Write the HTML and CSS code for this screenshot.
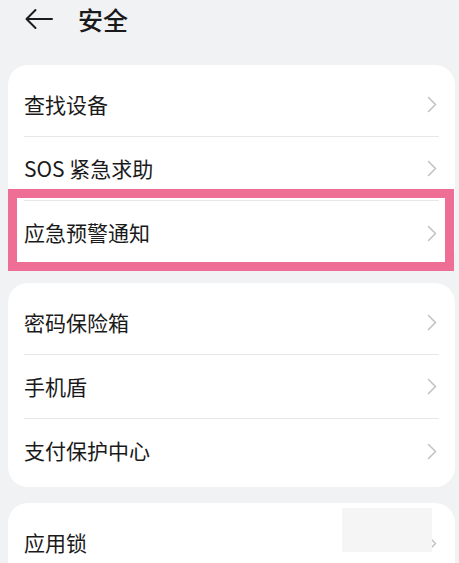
FILE: index.html
```html
<!DOCTYPE html>
<html lang="zh">
<head>
<meta charset="utf-8">
<link rel="stylesheet" href="styles.css">
</head>
<body>
<header class="topbar">
  <svg class="back" width="28" height="22" viewBox="0 0 28 22"><path d="M10.5 2 L1.5 11 L10.5 20 M1.5 11 H27" fill="none" stroke="#1c1c1c" stroke-width="2" stroke-linecap="round" stroke-linejoin="round"/></svg>
  <h1 class="title">安全</h1>
</header>

<section class="card card-first">
  <div class="row"><span class="label">查找设备</span><svg class="chev" width="10" height="17" viewBox="0 0 10 17"><path d="M1.5 1.5 L8.5 8.5 L1.5 15.5" fill="none" stroke="#c3c3c3" stroke-width="1.6" stroke-linecap="round" stroke-linejoin="round"/></svg></div>
  <div class="row"><span class="label">SOS 紧急求助</span><svg class="chev" width="10" height="17" viewBox="0 0 10 17"><path d="M1.5 1.5 L8.5 8.5 L1.5 15.5" fill="none" stroke="#c3c3c3" stroke-width="1.6" stroke-linecap="round" stroke-linejoin="round"/></svg></div>
  <div class="row row-last row-marked"><span class="label">应急预警通知</span><svg class="chev" width="10" height="17" viewBox="0 0 10 17"><path d="M1.5 1.5 L8.5 8.5 L1.5 15.5" fill="none" stroke="#c3c3c3" stroke-width="1.6" stroke-linecap="round" stroke-linejoin="round"/></svg></div>
</section>

<section class="card card-second">
  <div class="row"><span class="label">密码保险箱</span><svg class="chev" width="10" height="17" viewBox="0 0 10 17"><path d="M1.5 1.5 L8.5 8.5 L1.5 15.5" fill="none" stroke="#c3c3c3" stroke-width="1.6" stroke-linecap="round" stroke-linejoin="round"/></svg></div>
  <div class="row"><span class="label">手机盾</span><svg class="chev" width="10" height="17" viewBox="0 0 10 17"><path d="M1.5 1.5 L8.5 8.5 L1.5 15.5" fill="none" stroke="#c3c3c3" stroke-width="1.6" stroke-linecap="round" stroke-linejoin="round"/></svg></div>
  <div class="row row-last"><span class="label">支付保护中心</span><svg class="chev" width="10" height="17" viewBox="0 0 10 17"><path d="M1.5 1.5 L8.5 8.5 L1.5 15.5" fill="none" stroke="#c3c3c3" stroke-width="1.6" stroke-linecap="round" stroke-linejoin="round"/></svg></div>
</section>

<section class="card card-third">
  <div class="row row-last row-masked"><span class="label">应用锁</span><svg class="chev" width="10" height="17" viewBox="0 0 10 17"><path d="M1.5 1.5 L8.5 8.5 L1.5 15.5" fill="none" stroke="#c3c3c3" stroke-width="1.6" stroke-linecap="round" stroke-linejoin="round"/></svg></div>
</section>
</body>
</html>
```

FILE: styles.css
```css
html, body {
  margin: 0;
  padding: 0;
}
body {
  background: #f1f2f4;
  font-family: "Noto Sans CJK SC", "Noto Sans", sans-serif;
  color: #1a1a1a;
  width: 459px;
  height: 563px;
  overflow: hidden;
}
.topbar {
  display: flex;
  align-items: center;
  height: 38px;
  padding-left: 25px;
}
.back {
  display: block;
  margin-right: 25px;
}
.title {
  margin: 0;
  font-size: 25px;
  font-weight: 500;
  line-height: 38px;
  color: #1a1a1a;
}
.card {
  background: #fff;
  border-radius: 20px;
  margin: 0 4px 0 8px;
  padding: 8px 16px 4px 16px;
}
.card-first { margin-top: 27px; }
.card-second { margin-top: 14px; }
.card-third { margin-top: 16px; padding-bottom: 8px; }
.row {
  position: relative;
  display: flex;
  align-items: center;
  justify-content: space-between;
  height: 64px;
  border-bottom: 1px solid #e7e7e7;
  box-sizing: border-box;
}
.row-last { border-bottom: none; }
.label {
  font-size: 21px;
  line-height: 1;
  color: #1a1a1a;
  padding-bottom: 1px;
}
.chev {
  display: block;
  margin-right: 2px;
}
.row-marked::after {
  content: "";
  position: absolute;
  left: -16px;
  right: -15px;
  top: -12px;
  bottom: -6px;
  border: 9px solid #ee6e95;
  box-sizing: border-box;
  pointer-events: none;
}
.row-masked::after {
  content: "";
  position: absolute;
  left: 318px;
  width: 90px;
  top: -3px;
  height: 44px;
  background: #f5f5f6;
}
```
